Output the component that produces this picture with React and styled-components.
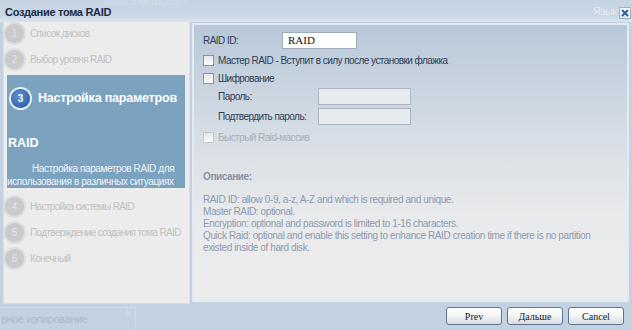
import React from 'react';
import styled, { createGlobalStyle } from 'styled-components';

const Global = createGlobalStyle`
html, body {
  margin: 0;
  padding: 0;
  background: #c3d2e3;
}
* { box-sizing: border-box; }
`

const Window = styled.div`
width: 632px;
height: 330px;
display: flex;
flex-direction: column;
background: #c3d2e3;
overflow: hidden;
font-family: "Liberation Sans", Arial, sans-serif;
`

const TitleBar = styled.div`
height: 22px;
flex-shrink: 0;
display: flex;
align-items: center;
padding: 0 1px 0 5px;
background: linear-gradient(#c6d3e2 0%, #c9d6e5 70%, #dbe4ee 100%);
position: relative;
`

const Title = styled.div`
flex: 1;
font-weight: bold;
font-size: 11px;
letter-spacing: -0.3px;
color: #1d2c44;
padding-top: 2px;
`

const GhostUrl = styled.span`
position: absolute;
left: 104px;
top: -5px;
font-size: 11px;
color: rgba(255,255,255,0.22);
`

const GhostLang = styled.span`
font-size: 11px;
letter-spacing: -0.4px;
color: rgba(255,255,255,0.5);
margin-right: 2px;
`

const CloseBtn = styled.div`
width: 12px;
height: 12px;
border: 1px solid #9fb2c8;
background: linear-gradient(#ffffff, #dfe8f2);
display: flex;
align-items: center;
justify-content: center;
margin-top: 3px;
`

const Body = styled.div`
display: flex;
flex-shrink: 0;
height: 283px;
padding-left: 3px;
gap: 2px;
`

const Sidebar = styled.div`
width: 187px;
height: 282px;
background: #ececec;
border: 1px solid #d6dfe9;
border-top: none;
display: flex;
flex-direction: column;
gap: 4px;
`

const Step = styled.div`
height: 22px;
display: flex;
align-items: center;
gap: 6px;
padding-left: 1px;
font-size: 10px;
letter-spacing: -0.65px;
white-space: nowrap;
color: #c1c1c1;
`

const Circle = styled.div`
width: 19px;
height: 19px;
border-radius: 50%;
display: flex;
align-items: center;
justify-content: center;
font-size: 10px;
letter-spacing: 0;
flex-shrink: 0;
color: ${p => p.active ? '#ffffff' : '#e4e4e4'};
background: ${p => p.active
  ? 'radial-gradient(circle at 40% 35%, #5d8fd0, #2456a0)'
  : '#cacaca'};
box-shadow: 0 0 0 2px ${p => p.active ? '#e9eef4' : '#dedede'};
font-weight: ${p => p.active ? 'bold' : 'normal'};
`

const ActiveBlock = styled.div`
margin: 1px 4px 3px 3px;
height: 113px;
flex-shrink: 0;
background: #7ba3c0;
display: flex;
flex-direction: column;
color: #ffffff;
`

const ActiveHead = styled.div`
display: flex;
align-items: center;
gap: 8px;
margin-top: 12px;
padding-left: 4px;
height: 22px;
font-weight: bold;
font-size: 12.5px;
letter-spacing: -0.2px;
white-space: nowrap;
`

const ActiveTail = styled.div`
font-weight: bold;
font-size: 12.5px;
line-height: 16px;
margin-top: 26px;
padding-left: 1px;
`

const ActiveDesc = styled.div`
margin-top: 11px;
font-size: 10px;
letter-spacing: -0.4px;
line-height: 13px;
color: #f2f6fa;
white-space: nowrap;
`

const DescLine = styled.div`
padding-left: ${p => p.indent || 0}px;
`

const Panel = styled.div`
width: 437px;
height: 279px;
margin-top: 1px;
border: 2px solid #e3eaf2;
background: linear-gradient(#b8c8d9 0%, #d6dde5 40%, #e9eaeb 70%, #ececec 100%);
padding: 4px 0 0 9px;
display: flex;
flex-direction: column;
font-size: 10px;
letter-spacing: -0.55px;
color: #2d3d52;
`

const Row = styled.div`
height: ${p => p.h || 18}px;
display: flex;
align-items: center;
white-space: nowrap;
padding-left: ${p => p.indent || 0}px;
color: ${p => p.disabled ? '#a7aeb8' : 'inherit'};
`

const Label = styled.span`
width: ${p => p.w}px;
flex-shrink: 0;
`

const TextInput = styled.div`
width: ${p => p.w}px;
height: 17px;
background: ${p => p.grey ? '#e8ebee' : '#ffffff'};
border: 1px solid ${p => p.grey ? '#aab5c2' : '#9eabbb'};
font-family: "Liberation Serif", "Times New Roman", serif;
font-size: 11px;
letter-spacing: 0;
color: #111;
padding: 1px 5px;
`

const Check = styled.span`
width: 11px;
height: 11px;
border: 1px solid ${p => p.disabled ? '#c4c8cd' : '#8e9297'};
background: linear-gradient(#e6e6e6, #fbfbfb);
margin-right: 4px;
flex-shrink: 0;
`

const DescTitle = styled.div`
margin-top: 23px;
font-weight: bold;
color: #8592a6;
font-size: 10px;
letter-spacing: -0.4px;
`

const DescText = styled.div`
margin-top: 12px;
color: #8d9ab0;
font-size: 10px;
letter-spacing: -0.4px;
line-height: 12px;
white-space: nowrap;
`

const Footer = styled.div`
height: 25px;
flex-shrink: 0;
display: flex;
align-items: flex-start;
padding-top: 2px;
`

const GhostBox = styled.div`
width: 136px;
height: 26px;
border: 1px solid #cfdbe8;
border-left: none;
border-bottom: none;
font-size: 11px;
letter-spacing: -0.4px;
color: #a7bbd2;
padding: 5px 0 0 1px;
position: relative;
white-space: nowrap;
`

const GhostPlus = styled.span`
position: absolute;
right: 5px;
top: 0px;
color: #d8e2ee;
font-size: 10px;
`

const Buttons = styled.div`
margin-left: auto;
margin-right: 8px;
display: flex;
gap: 5px;
`

const Button = styled.button`
width: 56px;
height: 18px;
border: 1px solid #5f7591;
border-radius: 3px;
background: linear-gradient(#ffffff 0%, #f1f3f5 50%, #d9dee4 100%);
font-family: "Liberation Serif", "Times New Roman", serif;
font-size: 10px;
color: #222;
padding: 0;
`

const steps = ['Список дисков', 'Выбор уровня RAID'];
const later = [['4', 'Настройка системы RAID'], ['5', 'Подтверждение создания тома RAID'], ['6', 'Конечный']];

export default function App() {
  return (
    <Window>
      <Global />
      <TitleBar>
        <GhostUrl>www.thecus.com</GhostUrl>
        <Title>Создание тома RAID</Title>
        <GhostLang>Язык</GhostLang>
        <CloseBtn>
          <svg width="8" height="8" viewBox="0 0 8 8">
            <path d="M1 1 L7 7 M7 1 L1 7" stroke="#2f5f9e" strokeWidth="2" />
          </svg>
        </CloseBtn>
      </TitleBar>
      <Body>
        <Sidebar>
          {steps.map((s, i) => (
            <Step key={s}><Circle>{i + 1}</Circle>{s}</Step>
          ))}
          <ActiveBlock>
            <ActiveHead><Circle active>3</Circle>Настройка параметров</ActiveHead>
            <ActiveTail>RAID</ActiveTail>
            <ActiveDesc>
              <DescLine indent={25}>Настройка параметров RAID для</DescLine>
              <DescLine>использования в различных ситуациях</DescLine>
            </ActiveDesc>
          </ActiveBlock>
          {later.map(([n, s]) => (
            <Step key={n}><Circle>{n}</Circle>{s}</Step>
          ))}
        </Sidebar>
        <Panel>
          <Row h={22}>
            <Label w={79}>RAID ID:</Label>
            <TextInput w={75}>RAID</TextInput>
          </Row>
          <Row><Check />Мастер RAID - Вступит в силу после установки флажка</Row>
          <Row><Check />Шифрование</Row>
          <Row h={19} indent={15}>
            <Label w={100}>Пароль:</Label>
            <TextInput w={93} grey />
          </Row>
          <Row h={20} indent={15}>
            <Label w={100}>Подтвердить пароль:</Label>
            <TextInput w={93} grey />
          </Row>
          <Row h={22} disabled><Check disabled />Быстрый Raid-массив</Row>
          <DescTitle>Описание:</DescTitle>
          <DescText>
            RAID ID: allow 0-9, a-z, A-Z and which is required and unique.<br />
            Master RAID: optional.<br />
            Encryption: optional and password is limited to 1-16 characters.<br />
            Quick Raid: optional and enable this setting to enhance RAID creation time if there is no partition<br />
            existed inside of hard disk.
          </DescText>
        </Panel>
      </Body>
      <Footer>
        <GhostBox>вное копирование<GhostPlus>+</GhostPlus></GhostBox>
        <Buttons>
          <Button>Prev</Button>
          <Button>Дальше</Button>
          <Button>Cancel</Button>
        </Buttons>
      </Footer>
    </Window>
  );
}
